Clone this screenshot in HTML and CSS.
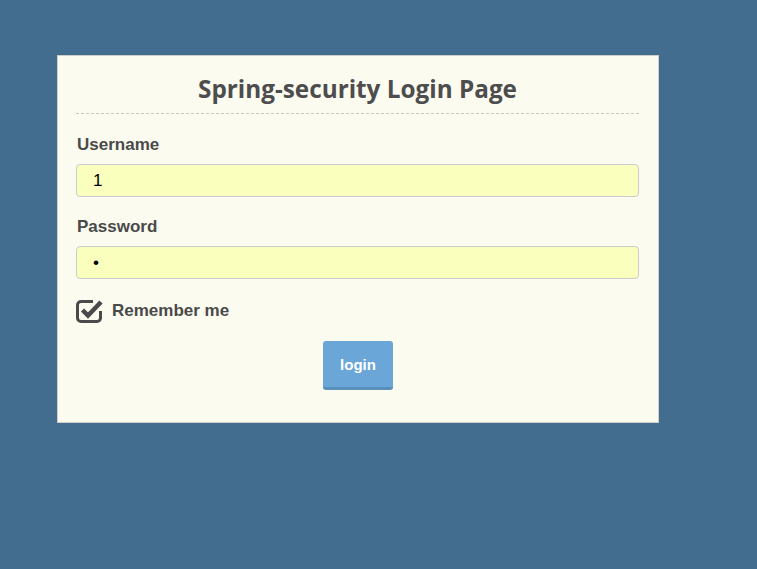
FILE: index.html
```html
<!DOCTYPE html>
<html>
<head>
<meta charset="utf-8">
<link rel="stylesheet" href="styles.css">
</head>
<body>
<div class="card">
  <h2 class="title">Spring-security Login Page</h2>
  <form class="form">
    <label class="label">Username</label>
    <div class="input">1</div>
    <label class="label label-pw">Password</label>
    <div class="input input-pw">•</div>
    <div class="remember">
      <svg class="check" width="27" height="25" viewBox="0 0 27 25">
        <path d="M17 3.5 H5 a3.5 3.5 0 0 0 -3.5 3.5 V20 a3.5 3.5 0 0 0 3.5 3.5 H21 a3.5 3.5 0 0 0 3.5 -3.5 V13" fill="none" stroke="#4a4a4a" stroke-width="3"/>
        <path d="M6.5 12 L12 17.5 L25 4" fill="none" stroke="#4a4a4a" stroke-width="4.5" stroke-linejoin="miter"/>
      </svg>
      <span class="remember-text">Remember me</span>
    </div>
    <div class="actions">
      <button type="button" class="btn">login</button>
    </div>
  </form>
</div>
</body>
</html>
```
FILE: styles.css
```css
html, body {
  margin: 0;
  padding: 0;
}
body {
  background: #436d8f;
  height: 569px;
  font-family: "Liberation Sans", Arial, sans-serif;
  color: #4a4a4a;
}
.card {
  margin: 55px 0 0 57px;
  width: 602px;
  box-sizing: border-box;
  background: #fbfbf0;
  border: 1px solid #cfcfc8;
  padding: 0 19px 32px 18px;
}
.title {
  margin: 0;
  padding: 18px 0 9px;
  font-family: "Open Sans", "Noto Sans", sans-serif;
  font-weight: 700;
  font-size: 24.3px;
  line-height: 30px;
  text-align: center;
  color: #4d4d4d;
  border-bottom: 1px dashed #c8c8c0;
}
.form {
  display: flex;
  flex-direction: column;
}
.label {
  margin-top: 21px;
  padding-left: 1px;
  font-size: 17px;
  font-weight: 700;
  line-height: 20px;
}
.label-pw {
  margin-top: 20px;
}
.input {
  margin-top: 9px;
  height: 33px;
  box-sizing: border-box;
  background: #faffbd;
  border: 1px solid #cccccc;
  border-radius: 4px;
  padding: 0 16px;
  font-size: 17px;
  line-height: 31px;
  color: #000;
}
.remember {
  margin-top: 19px;
  display: flex;
  align-items: center;
  gap: 9px;
}
.check {
  display: block;
}
.remember-text {
  font-size: 17px;
  font-weight: 700;
  line-height: 20px;
}
.actions {
  margin-top: 18px;
  display: flex;
  justify-content: center;
}
.btn {
  width: 70px;
  height: 49px;
  box-sizing: border-box;
  background: #6aa6d8;
  border: none;
  border-bottom: 3px solid #5a8ebb;
  border-radius: 3px;
  color: #fff;
  font-family: "Liberation Sans", Arial, sans-serif;
  font-weight: 700;
  font-size: 15px;
  padding: 0;
  margin-left: 1px;
}
```
